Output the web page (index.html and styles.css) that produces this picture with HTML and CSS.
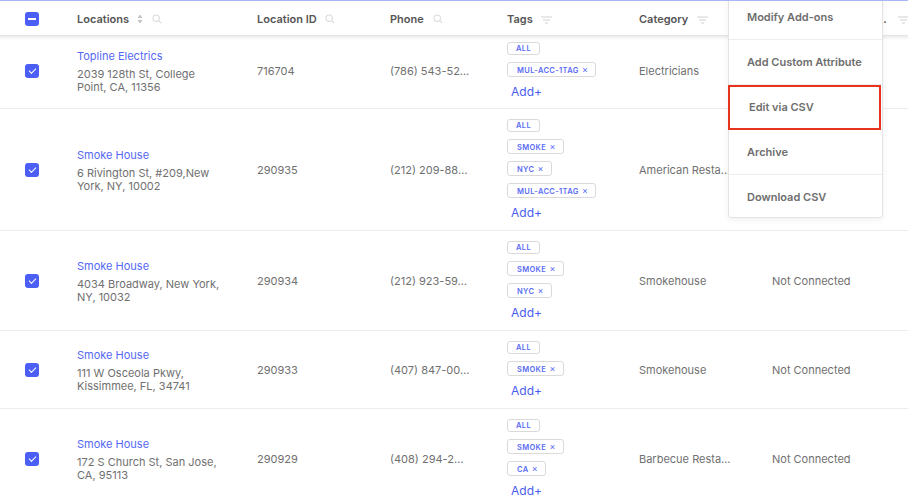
FILE: index.html
```html
<!DOCTYPE html>
<html lang="en">
<head>
    <meta charset="UTF-8">
    <title>Locations</title>
    <link rel="stylesheet" href="styles.css">
</head>
<body>

<div id="page">
    <table id="grid">
        <colgroup>
            <col class="c-cb">
            <col class="c-loc">
            <col class="c-id">
            <col class="c-phone">
            <col class="c-tags">
            <col class="c-cat">
            <col class="c-status">
        </colgroup>
        <thead>
            <tr>
                <th><span class="cb cb-part"></span></th>
                <th>Locations
                    <svg class="ico" width="6" height="10" viewBox="0 0 6 10"><path d="M3 0.5 L5.5 4 L0.5 4 Z M3 9.5 L5.5 6 L0.5 6 Z" fill="#c4c4c4"/></svg>
                    <svg class="ico ico-s" width="10" height="10" viewBox="0 0 10 10"><circle cx="4.2" cy="4.2" r="3.2" fill="none" stroke="#dcdcdc" stroke-width="1.1"/><path d="M6.6 6.6 L9.2 9.2" stroke="#dcdcdc" stroke-width="1.2"/></svg>
                </th>
                <th>Location ID
                    <svg class="ico ico-s" width="10" height="10" viewBox="0 0 10 10"><circle cx="4.2" cy="4.2" r="3.2" fill="none" stroke="#dcdcdc" stroke-width="1.1"/><path d="M6.6 6.6 L9.2 9.2" stroke="#dcdcdc" stroke-width="1.2"/></svg>
                </th>
                <th>Phone
                    <svg class="ico ico-s" width="10" height="10" viewBox="0 0 10 10"><circle cx="4.2" cy="4.2" r="3.2" fill="none" stroke="#dcdcdc" stroke-width="1.1"/><path d="M6.6 6.6 L9.2 9.2" stroke="#dcdcdc" stroke-width="1.2"/></svg>
                </th>
                <th>Tags
                    <svg class="ico ico-f" width="11" height="8" viewBox="0 0 11 8"><path d="M0 1 H11 M2 4 H9 M4 7 H7" stroke="#d2d2d2" stroke-width="1.1"/></svg>
                </th>
                <th>Category
                    <svg class="ico ico-f" width="11" height="8" viewBox="0 0 11 8"><path d="M0 1 H11 M2 4 H9 M4 7 H7" stroke="#d2d2d2" stroke-width="1.1"/></svg>
                </th>
                <th>Connection Status<span class="dot">.</span>
                    <svg class="ico ico-end" width="11" height="8" viewBox="0 0 11 8"><path d="M0 1 H11 M2 4 H9 M4 7 H7" stroke="#d2d2d2" stroke-width="1.1"/></svg>
                </th>
            </tr>
        </thead>
        <tbody>
            <tr class="first">
                <td><span class="cb"></span></td>
                <td>
                    <a class="name" href="#">Topline Electrics</a>
                    <div class="addr">2039 128th St, College<br>Point, CA, 11356</div>
                </td>
                <td>716704</td>
                <td>(786) 543-52…</td>
                <td>
                    <span class="tag tag-all">ALL</span>
                    <span class="tag">MUL-ACC-1TAG <i>×</i></span>
                    <a class="add" href="#">Add+</a>
                </td>
                <td>Electricians</td>
                <td>Not Connected</td>
            </tr>
            <tr>
                <td><span class="cb"></span></td>
                <td>
                    <a class="name" href="#">Smoke House</a>
                    <div class="addr">6 Rivington St, #209,New<br>York, NY, 10002</div>
                </td>
                <td>290935</td>
                <td>(212) 209-88…</td>
                <td>
                    <span class="tag tag-all">ALL</span>
                    <span class="tag">SMOKE <i>×</i></span>
                    <span class="tag">NYC <i>×</i></span>
                    <span class="tag">MUL-ACC-1TAG <i>×</i></span>
                    <a class="add" href="#">Add+</a>
                </td>
                <td>American Resta…</td>
                <td>Not Connected</td>
            </tr>
            <tr>
                <td><span class="cb"></span></td>
                <td>
                    <a class="name" href="#">Smoke House</a>
                    <div class="addr">4034 Broadway, New York,<br>NY, 10032</div>
                </td>
                <td>290934</td>
                <td>(212) 923-59…</td>
                <td>
                    <span class="tag tag-all">ALL</span>
                    <span class="tag">SMOKE <i>×</i></span>
                    <span class="tag">NYC <i>×</i></span>
                    <a class="add" href="#">Add+</a>
                </td>
                <td>Smokehouse</td>
                <td>Not Connected</td>
            </tr>
            <tr>
                <td><span class="cb"></span></td>
                <td>
                    <a class="name" href="#">Smoke House</a>
                    <div class="addr">111 W Osceola Pkwy,<br>Kissimmee, FL, 34741</div>
                </td>
                <td>290933</td>
                <td>(407) 847-00…</td>
                <td>
                    <span class="tag tag-all">ALL</span>
                    <span class="tag">SMOKE <i>×</i></span>
                    <a class="add" href="#">Add+</a>
                </td>
                <td>Smokehouse</td>
                <td>Not Connected</td>
            </tr>
            <tr>
                <td><span class="cb"></span></td>
                <td>
                    <a class="name" href="#">Smoke House</a>
                    <div class="addr">172 S Church St, San Jose,<br>CA, 95113</div>
                </td>
                <td>290929</td>
                <td>(408) 294-2…</td>
                <td>
                    <span class="tag tag-all">ALL</span>
                    <span class="tag">SMOKE <i>×</i></span>
                    <span class="tag">CA <i>×</i></span>
                    <a class="add" href="#">Add+</a>
                </td>
                <td>Barbecue Resta…</td>
                <td>Not Connected</td>
            </tr>
        </tbody>
    </table>

    <ul id="menu">
        <li>Modify Add-ons</li>
        <li>Add Custom Attribute</li>
        <li class="selected">Edit via CSV</li>
        <li>Archive</li>
        <li>Download CSV</li>
    </ul>
</div>

</body>
</html>
```

FILE: styles.css
```css
*{
    margin: 0;
    padding: 0;
    box-sizing: border-box;
}
ul, ol{
    list-style: none;
}
a{
    text-decoration: none;
}
html, body{
    width: 908px;
    height: 498px;
    overflow: hidden;
    background: #fff;
}
body{
    font-family: Inter, "Noto Sans", sans-serif;
    font-size: 11px;
    color: #707070;
}

#page{
    position: relative;
    width: 908px;
    height: 498px;
    overflow: hidden;
    border-top: 1px solid #aab4f7;
}
#grid{
    width: 1000px;
    table-layout: fixed;
    border-collapse: collapse;
}
.c-cb{ width: 77px; }
.c-loc{ width: 180px; }
.c-id{ width: 133px; }
.c-phone{ width: 117px; }
.c-tags{ width: 132px; }
.c-cat{ width: 133px; }
.c-status{ width: 228px; }

#grid th{
    height: 34px;
    padding-top: 3px;
    text-align: left;
    font-weight: 600;
    font-size: 11px;
    color: #555;
    white-space: nowrap;
    vertical-align: middle;
    border-bottom: 1px solid #e4e4e4;
}
#grid th:first-child,
#grid td:first-child{
    padding-left: 25px;
}
.ico{
    vertical-align: -1px;
    margin-left: 5px;
}
.ico-s{
    margin-left: 6px;
}
.ico-f{
    margin-left: 6px;
}
.dot{
    margin-left: 13px;
}
.ico-end{
    margin-left: 9px;
}

#grid td{
    vertical-align: middle;
    border-bottom: 1px solid #ececec;
    padding: 10px 0 9px 0;
    white-space: nowrap;
}
#grid tr.first td{
    padding-top: 6px;
    padding-bottom: 8px;
    background: linear-gradient(#ececec, rgba(255,255,255,0) 4px) no-repeat top / 100% 4px;
}

.cb{
    display: block;
    width: 14px;
    height: 14px;
    border-radius: 3px;
    background: #4b5ef6;
    position: relative;
}
.cb:after{
    content: '';
    position: absolute;
    left: 4px;
    top: 4px;
    width: 6px;
    height: 3px;
    border-left: 1.2px solid #fff;
    border-bottom: 1.2px solid #fff;
    transform: rotate(-45deg);
}
.cb-part:after{
    left: 3px;
    top: 6px;
    width: 8px;
    height: 0;
    border-left: 0;
    border-bottom: 2px solid #fff;
    transform: none;
}

.name{
    display: block;
    color: #5468f5;
    font-size: 11px;
    line-height: 16px;
    margin-bottom: 4px;
    margin-top: 1px;
}
.addr{
    line-height: 13px;
    white-space: nowrap;
}

.tag{
    display: block;
    width: fit-content;
    height: 15px;
    line-height: 13px;
    padding: 0 7px 0 9px;
    border: 1px solid #dadada;
    border-radius: 3px;
    color: #5a6cf5;
    font-size: 7.5px;
    font-weight: 600;
    letter-spacing: 0.35px;
    margin-bottom: 7px;
}
.tag i{
    font-style: normal;
    font-size: 9px;
    font-weight: 400;
    margin-left: 1px;
}
.tag-all{
    height: 13px;
    line-height: 11px;
    padding: 0 8px;
}
.add{
    display: block;
    color: #4a5cf0;
    font-size: 12px;
    line-height: 16px;
    padding-left: 4px;
}

#menu{
    position: absolute;
    left: 728px;
    top: -7px;
    width: 155px;
    background: #fff;
    border: 1px solid #e3e3e3;
    border-radius: 0 0 3px 3px;
    box-shadow: 0 2px 6px rgba(0,0,0,0.06);
}
#menu li{
    height: 45px;
    line-height: 44px;
    padding-left: 18px;
    border-bottom: 1px solid #ededed;
    font-size: 11px;
    font-weight: 600;
    color: #6e6e6e;
}
#menu li:last-child{
    height: 42px;
    border-bottom: 0;
}
#menu .selected{
    border: 2px solid #e8321e;
    margin: 0 1px 0 -1px;
    line-height: 41px;
    padding-left: 19px;
}
```
